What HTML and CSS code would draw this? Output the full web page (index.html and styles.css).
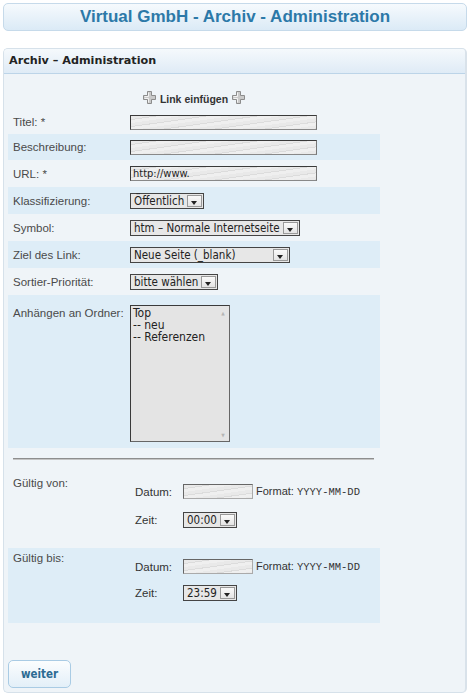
FILE: index.html
```html
<!DOCTYPE html>
<html lang="de">
<head>
<meta charset="utf-8">
<title>Virtual GmbH - Archiv - Administration</title>
<link rel="stylesheet" href="styles.css">
</head>
<body>
<div class="page">
  <div class="titlebar">Virtual GmbH - Archiv - Administration</div>
  <div class="panel">
    <div class="panel-head">Archiv – Administration</div>
    <div class="panel-body">
      <div class="link-row">
        <svg class="plus" viewBox="0 0 13 13" width="13" height="13"><path d="M4.5 0.5h4v4h4v4h-4v4h-4v-4h-4v-4h4z" fill="#c9c9c9" stroke="#8c8c8c" stroke-width="1"/><path d="M5.5 11.5V7.5H1.5M5.5 1.5v4h-4" fill="none" stroke="#f2f2f2" stroke-width="1"/></svg>
        <span class="link-text">Link einfügen</span>
        <svg class="plus" viewBox="0 0 13 13" width="13" height="13"><path d="M4.5 0.5h4v4h4v4h-4v4h-4v-4h-4v-4h4z" fill="#c9c9c9" stroke="#8c8c8c" stroke-width="1"/><path d="M5.5 11.5V7.5H1.5M5.5 1.5v4h-4" fill="none" stroke="#f2f2f2" stroke-width="1"/></svg>
      </div>
      <div class="row h24"><span class="label">Titel: *</span><span class="input w187"></span></div>
      <div class="row shaded h26"><span class="label">Beschreibung:</span><span class="input w187"></span></div>
      <div class="row h27"><span class="label">URL: *</span><span class="input w187">http://www.</span></div>
      <div class="row shaded h27"><span class="label">Klassifizierung:</span><span class="select"><span class="sel-text">Öffentlich</span><span class="arrow"></span></span></div>
      <div class="row h27"><span class="label">Symbol:</span><span class="select"><span class="sel-text">htm – Normale Internetseite</span><span class="arrow"></span></span></div>
      <div class="row shaded h27"><span class="label">Ziel des Link:</span><span class="select w160"><span class="sel-text grow">Neue Seite (_blank)</span><span class="arrow"></span></span></div>
      <div class="row h27"><span class="label">Sortier-Priorität:</span><span class="select"><span class="sel-text">bitte wählen</span><span class="arrow"></span></span></div>
      <div class="row shaded tall"><span class="label">Anhängen an Ordner:</span>
        <div class="listbox">
          <div class="options"><div>Top</div><div>-- neu</div><div>-- Referenzen</div></div>
          <div class="scroll"><span class="sup">▲</span><span class="sdown">▼</span></div>
        </div>
      </div>
      <div class="sep-row"><div class="sep"></div></div>
      <div class="row date-row von"><span class="label">Gültig von:</span>
        <div class="dt">
          <div class="dt-line"><span class="dt-label">Datum:</span><span class="input w69"></span><span class="fmt">Format: <code>YYYY-MM-DD</code></span></div>
          <div class="dt-line"><span class="dt-label">Zeit:</span><span class="select"><span class="sel-text">00:00</span><span class="arrow"></span></span></div>
        </div>
      </div>
      <div class="row shaded date-row bis"><span class="label">Gültig bis:</span>
        <div class="dt">
          <div class="dt-line"><span class="dt-label">Datum:</span><span class="input w69"></span><span class="fmt">Format: <code>YYYY-MM-DD</code></span></div>
          <div class="dt-line"><span class="dt-label">Zeit:</span><span class="select"><span class="sel-text">23:59</span><span class="arrow"></span></span></div>
        </div>
      </div>
      <div class="actions"><button class="btn" type="button">weiter</button></div>
    </div>
  </div>
</div>
</body>
</html>
```

FILE: styles.css
```css
* { box-sizing: border-box; }
body {
  margin: 0;
  background: #ffffff;
  font-family: "Liberation Sans", Arial, sans-serif;
  font-size: 11px;
  color: #444;
}
.page { padding: 3px 5px 0 3px; }
.titlebar {
  height: 28px;
  border: 1px solid #c6daea;
  border-radius: 5px;
  background: linear-gradient(#f6fafd, #dbeaf6);
  color: #2c79a8;
  font-weight: bold;
  font-size: 17px;
  text-align: center;
  line-height: 26px;
  margin-bottom: 17px;
}
.panel {
  height: 645px;
  border: 1px solid #d6e1ea;
  border-right: 2px solid #d9e2ea;
  border-radius: 5px;
  background: #eff4f8;
  overflow: hidden;
}
.panel-head {
  height: 25px;
  border-bottom: 1px solid #bcd4e8;
  background: linear-gradient(#f5f9fc, #dfebf6);
  font-family: "DejaVu Sans", sans-serif;
  font-weight: bold;
  font-size: 11.2px;
  color: #222;
  padding-left: 5px;
  line-height: 24px;
}
.panel-body { padding: 0 4px; }
.link-row {
  width: 372px;
  height: 36px;
  padding-top: 11px;
  display: flex;
  justify-content: center;
  align-items: center;
  gap: 4px;
}
.link-text {
  font-weight: bold;
  font-size: 10.5px;
  color: #333;
  padding-top: 3px;
}
.plus { display: block; }
.row {
  width: 372px;
  display: flex;
  align-items: center;
  padding-left: 5px;
}
.row.shaded { background: #deedf7; }
.h24 { height: 24px; }
.h26 { height: 26px; }
.h27 { height: 27px; }
.label { width: 117px; flex: none; color: #4a4a4a; font-size: 11.5px; }
.input {
  display: block;
  height: 15px;
  border: 1px solid #3a3a3a;
  border-right-color: #777;
  border-bottom-color: #888;
  background: repeating-linear-gradient(172deg, #e9e9e9 0 3px, #dcdcdc 3px 4px, #efefef 4px 7px);
  font-family: "DejaVu Sans Condensed", "DejaVu Sans", sans-serif;
  font-size: 11px;
  line-height: 13px;
  color: #222;
  padding-left: 2px;
}
.w187 { width: 187px; }
.w69 { width: 70px; border-color: #666; border-right-color: #aaa; border-bottom-color: #aaa; }
.select {
  display: flex;
  height: 16px;
  border: 1px solid #444;
  background: #e7e7e7;
  font-family: "DejaVu Sans Condensed", "DejaVu Sans", sans-serif;
  font-size: 11.5px;
  color: #222;
  line-height: 15px;
}
.sel-text { padding: 0 3px 0 3px; white-space: nowrap; }
.sel-text.grow { flex: 1; }
.w160 { width: 160px; }
.arrow {
  width: 15px;
  margin: 1px 1px 1px 0;
  border: 1px solid #999;
  background: linear-gradient(#fafafa, #e4e4e4);
  position: relative;
}
.arrow::after {
  content: "";
  position: absolute;
  left: 3px;
  top: 5px;
  border-left: 3.5px solid transparent;
  border-right: 3.5px solid transparent;
  border-top: 4px solid #222;
}
.row.tall {
  height: 153px;
  align-items: flex-start;
  padding-top: 10px;
}
.row.tall .label { padding-top: 2px; }
.listbox {
  display: flex;
  width: 100px;
  height: 137px;
  border: 1px solid #3a3a3a;
  border-right-color: #666;
  border-bottom-color: #666;
  background: #e4e4e4;
  font-family: "DejaVu Sans Condensed", "DejaVu Sans", sans-serif;
  font-size: 12px;
  color: #222;
  line-height: 12px;
}
.options { flex: 1; padding: 1px 0 0 2px; }
.scroll {
  width: 12px;
  display: flex;
  flex-direction: column;
  justify-content: space-between;
  align-items: center;
  color: #b5b5b5;
  font-size: 5px;
  line-height: 6px;
  padding: 4px 0 3px;
}
.sep-row { width: 372px; height: 14px; padding: 10px 6px 0 5px; }
.sep { height: 2px; border-top: 1px solid #8e8e8e; border-bottom: 1px solid #c4c4c4; }
.date-row { align-items: flex-start; }
.von { height: 86px; padding-top: 15px; }
.bis { height: 75px; padding-top: 4px; }
.dt { padding-top: 7px; display: flex; flex-direction: column; gap: 13px; }
.bis .dt { gap: 11px; }
.dt-line { display: flex; align-items: center; }
.dt-label { width: 53px; padding-left: 5px; font-size: 11.5px; color: #333; }
.fmt { padding-left: 3px; font-size: 11px; color: #333; }
.fmt code { font-family: "Liberation Mono", monospace; font-size: 10.5px; }
.actions { padding-top: 37px; }
.btn {
  display: block;
  width: 63px;
  height: 28px;
  border: 1px solid #a9cbe4;
  border-radius: 5px;
  background: linear-gradient(#fbfdfe, #e3eff8);
  font-family: "DejaVu Sans Condensed", "DejaVu Sans", sans-serif;
  font-weight: bold;
  font-size: 11.5px;
  color: #2c6b93;
  padding: 0;
}
```
